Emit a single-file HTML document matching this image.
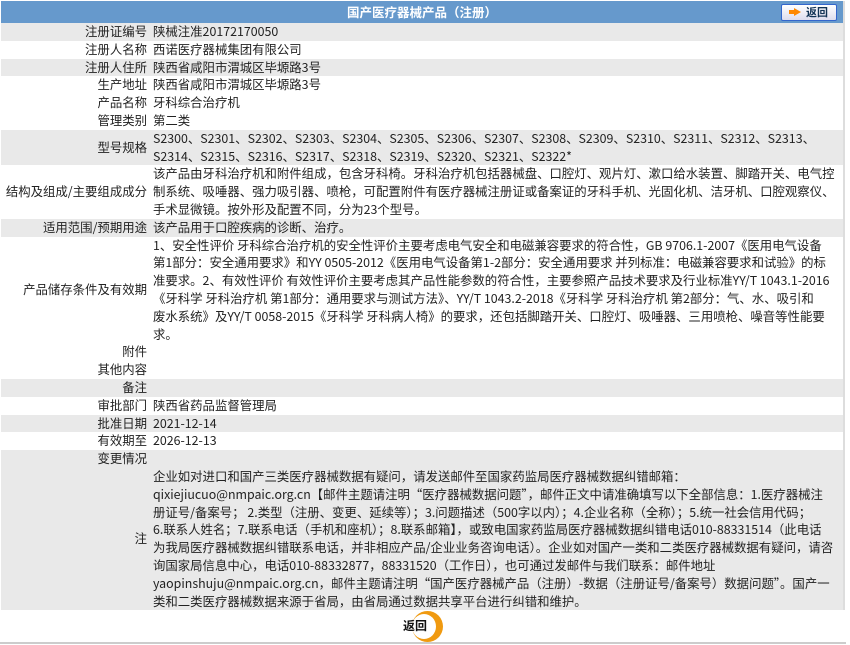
<!DOCTYPE html>
<html><head><meta charset="utf-8"><style>
*{margin:0;padding:0;box-sizing:border-box}
body{width:850px;height:645px;background:#fff;font-family:"Noto Sans CJK SC","Liberation Sans",sans-serif;font-size:12.4px;color:#222;position:relative;overflow:hidden}
.wrap{position:absolute;left:1px;top:1px;width:844px;border-right:2px solid #ddd}
.hd{height:22px;background:#6699cc;color:#fff;font-weight:bold;text-align:center;line-height:22px;font-size:12.5px;position:relative}
.btn{position:absolute;right:6px;top:3px;width:56px;height:17px;background:linear-gradient(#fff,#dde);border:1px solid #36c;border-radius:2px;color:#135;font-size:11px;line-height:15px;font-weight:bold;text-align:right;padding-right:8px}
.btn i{position:absolute;left:12px;top:3px;width:0;height:0;border-left:7px solid #f80;border-top:4.5px solid transparent;border-bottom:4.5px solid transparent}
.btn i:before{content:"";position:absolute;left:-12px;top:-2px;width:5px;height:4px;background:#f80}
.r{display:flex;line-height:17.8px;white-space:nowrap}
.r.g{background:#e9e9e9}
.l{width:146px;text-align:right;display:flex;align-items:center;justify-content:flex-end;flex-shrink:0}
.v{padding-left:6px}
.ft{position:absolute;left:0;top:609px;width:846px;height:35px;border-bottom:2px solid #ccc}
.back{position:absolute;left:403px;top:9px;font-weight:bold;font-size:12px;color:#111;line-height:16px}
.ring{position:absolute;left:412px;top:2px;width:31px;height:31px;border-radius:50%;background:#f09a10}
.ring:after{content:"";position:absolute;left:0;top:3px;width:24px;height:25px;border-radius:50%;background:#fff}
</style></head><body>
<div class="wrap">
<div class="hd">国产医疗器械产品（注册）<div class="btn"><i></i>返回</div></div>
<div class="r g"><div class="l">注册证编号</div><div class="v">陕械注准20172170050</div></div>
<div class="r"><div class="l">注册人名称</div><div class="v">西诺医疗器械集团有限公司</div></div>
<div class="r g"><div class="l">注册人住所</div><div class="v">陕西省咸阳市渭城区毕塬路3号</div></div>
<div class="r"><div class="l">生产地址</div><div class="v">陕西省咸阳市渭城区毕塬路3号</div></div>
<div class="r"><div class="l">产品名称</div><div class="v">牙科综合治疗机</div></div>
<div class="r"><div class="l">管理类别</div><div class="v">第二类</div></div>
<div class="r g"><div class="l">型号规格</div><div class="v">S2300、S2301、S2302、S2303、S2304、S2305、S2306、S2307、S2308、S2309、S2310、S2311、S2312、S2313、<br>S2314、S2315、S2316、S2317、S2318、S2319、S2320、S2321、S2322*</div></div>
<div class="r"><div class="l">结构及组成/主要组成成分</div><div class="v">该产品由牙科治疗机和附件组成，包含牙科椅。牙科治疗机包括器械盘、口腔灯、观片灯、漱口给水装置、脚踏开关、电气控<br>制系统、吸唾器、强力吸引器、喷枪，可配置附件有医疗器械注册证或备案证的牙科手机、光固化机、洁牙机、口腔观察仪、<br>手术显微镜。按外形及配置不同，分为23个型号。</div></div>
<div class="r g"><div class="l">适用范围/预期用途</div><div class="v">该产品用于口腔疾病的诊断、治疗。</div></div>
<div class="r"><div class="l">产品储存条件及有效期</div><div class="v">1、安全性评价 牙科综合治疗机的安全性评价主要考虑电气安全和电磁兼容要求的符合性，GB 9706.1-2007《医用电气设备<br>第1部分：安全通用要求》和YY 0505-2012《医用电气设备第1-2部分：安全通用要求 并列标准：电磁兼容要求和试验》的标<br>准要求。2、有效性评价 有效性评价主要考虑其产品性能参数的符合性，主要参照产品技术要求及行业标准YY/T 1043.1-2016<br>《牙科学 牙科治疗机 第1部分：通用要求与测试方法》、YY/T 1043.2-2018《牙科学 牙科治疗机 第2部分：气、水、吸引和<br>废水系统》及YY/T 0058-2015《牙科学 牙科病人椅》的要求，还包括脚踏开关、口腔灯、吸唾器、三用喷枪、噪音等性能要<br>求。</div></div>
<div class="r"><div class="l">附件</div><div class="v"></div></div>
<div class="r"><div class="l">其他内容</div><div class="v"></div></div>
<div class="r g"><div class="l">备注</div><div class="v"></div></div>
<div class="r"><div class="l">审批部门</div><div class="v">陕西省药品监督管理局</div></div>
<div class="r g"><div class="l">批准日期</div><div class="v">2021-12-14</div></div>
<div class="r"><div class="l">有效期至</div><div class="v">2026-12-13</div></div>
<div class="r g"><div class="l">变更情况</div><div class="v"></div></div>
<div class="r g"><div class="l">注</div><div class="v">企业如对进口和国产三类医疗器械数据有疑问，请发送邮件至国家药监局医疗器械数据纠错邮箱：<br>qixiejiucuo@nmpaic.org.cn【邮件主题请注明“医疗器械数据问题”，邮件正文中请准确填写以下全部信息：1.医疗器械注<br>册证号/备案号； 2.类型（注册、变更、延续等）；3.问题描述（500字以内）；4.企业名称（全称）；5.统一社会信用代码；<br>6.联系人姓名；7.联系电话（手机和座机）；8.联系邮箱】，或致电国家药监局医疗器械数据纠错电话010-88331514（此电话<br>为我局医疗器械数据纠错联系电话，并非相应产品/企业业务咨询电话）。企业如对国产一类和二类医疗器械数据有疑问，请咨<br>询国家局信息中心，电话010-88332877，88331520（工作日），也可通过发邮件与我们联系：邮件地址<br>yaopinshuju@nmpaic.org.cn，邮件主题请注明“国产医疗器械产品（注册）-数据（注册证号/备案号）数据问题”。国产一<br>类和二类医疗器械数据来源于省局，由省局通过数据共享平台进行纠错和维护。</div></div>
</div>
<div class="ft"><div class="ring"></div><div class="back">返回</div></div>
</body></html>
